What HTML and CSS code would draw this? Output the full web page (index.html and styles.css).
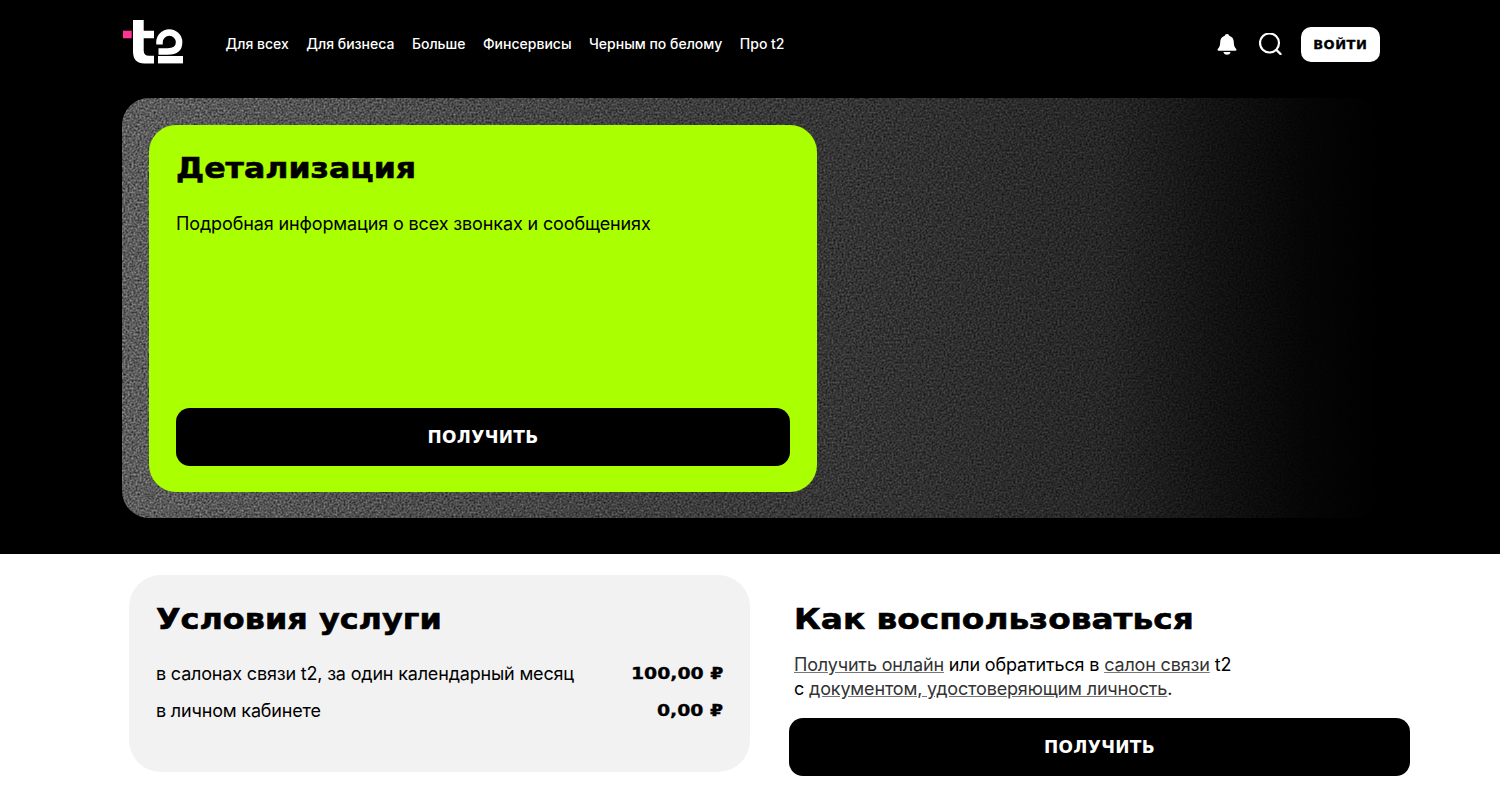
FILE: index.html
```html
<!DOCTYPE html>
<html lang="ru">
<head>
    <meta charset="utf-8">
    <title>Детализация</title>
    <link rel="stylesheet" href="styles.css">
</head>
<body>
    <div class="top">
        <header class="header">
            <svg class="logo" width="62" height="44" viewBox="0 0 62 44">
                <rect x="1" y="10.7" width="8.7" height="7.6" fill="#ff3495"/>
                <path fill="#fff" d="M11 0h10.7v10.7H32v7.6H21.7v12.2q0 5.3 5.3 5.3h5v7.6h-9.5Q11 43.400 11 31.500z"/>
                <path fill="none" stroke="#fff" stroke-width="6.500" d="M37.500 24.500v-2.200a9.800 9.800 0 0 1 19.600 0q0 9.200-11.500 9.200H36.500"/>
                <rect x="36" y="36" width="25" height="7.400" fill="#fff"/>
            </svg>
            <nav class="nav">
                <a href="#">Для всех</a>
                <a href="#">Для бизнеса</a>
                <a href="#">Больше</a>
                <a href="#">Финсервисы</a>
                <a href="#">Черным по белому</a>
                <a href="#">Про t2</a>
            </nav>
            <div class="header-right">
                <svg class="bell" width="20" height="21" viewBox="0 0 20 21">
                    <path fill="#fff" d="M10 0c1.300 0 2 .8 2.200 1.700 3 .8 4.600 3.300 4.600 6.300 0 3 .6 5.300 2.400 7 .6.600.3 1.700-.7 1.700H1.500c-1 0-1.300-1.100-.7-1.700 1.800-1.700 2.400-4 2.400-7 0-3 1.600-5.500 4.600-6.300C8 .8 8.700 0 10 0z"/>
                    <path fill="#fff" d="M6.500 18h7c0 1.600-1.500 2.800-3.500 2.800S6.500 19.600 6.500 18z"/>
                </svg>
                <svg class="search" width="23" height="22" viewBox="0 0 23 22">
                    <circle cx="10.500" cy="10" r="9.500" fill="none" stroke="#fff" stroke-width="2.200"/>
                    <path stroke="#fff" stroke-width="2.400" stroke-linecap="round" d="M17.500 17l4 4"/>
                </svg>
                <button class="login">ВОЙТИ</button>
            </div>
        </header>
        <section class="hero">
            <div class="hero-card">
                <h1 class="title">Детализация</h1>
                <p class="hero-text">Подробная информация о всех звонках и сообщениях</p>
                <button class="big-button">ПОЛУЧИТЬ</button>
            </div>
        </section>
    </div>
    <div class="bottom">
        <section class="terms">
            <h2 class="title">Условия услуги</h2>
            <div class="terms-row terms-row-first">
                <span>в салонах связи t2, за один календарный месяц</span>
                <b class="price">100,00 ₽</b>
            </div>
            <div class="terms-row">
                <span>в личном кабинете</span>
                <b class="price">0,00 ₽</b>
            </div>
        </section>
        <section class="howto">
            <h2 class="title">Как воспользоваться</h2>
            <p class="howto-text"><a href="#">Получить онлайн</a> или обратиться в <a href="#">салон связи</a> t2<br>с <a href="#">документом, удостоверяющим личность</a>.</p>
            <button class="big-button">ПОЛУЧИТЬ</button>
        </section>
    </div>
</body>
</html>
```

FILE: styles.css
```css
body {
    margin: 0;
    font-family: Inter, "Noto Sans", sans-serif;
    color: #000;
    background-color: #fff;
    overflow: hidden;
}

button {
    font-family: "DejaVu Sans", sans-serif;
    font-weight: bold;
    border: 0;
}

.top {
    height: 554px;
    background-color: #000;
}

.header {
    display: flex;
    align-items: center;
    height: 98px;
    padding-left: 122px;
    padding-right: 120px;
    padding-bottom: 10px;
    box-sizing: border-box;
}

.logo {
    margin-bottom: 4px;
}

.nav {
    display: flex;
    gap: 17.5px;
    margin-left: 41.5px;
    margin-bottom: 2px;
}

.nav a {
    color: #fff;
    font-size: 14px;
    font-weight: 500;
    text-decoration: none;
}

.header-right {
    display: flex;
    align-items: center;
    margin-left: auto;
}

.bell {
    margin-right: 22.5px;
}

.search {
    margin-right: 18.5px;
}

.login {
    width: 79.5px;
    height: 35px;
    border-radius: 10px;
    background-color: #fff;
    color: #000;
    font-size: 13px;
    letter-spacing: 0.5px;
    -webkit-text-stroke: 0.3px #000;
}

.hero {
    width: 1258px;
    height: 420px;
    margin-left: 122px;
    padding: 27px;
    box-sizing: border-box;
    border-radius: 27px;
    background-color: #000;
    background-image:
        linear-gradient(to right, rgba(0,0,0,0) 0, rgba(0,0,0,0.42) 56%, rgba(0,0,0,0.58) 78%, rgba(0,0,0,0.8) 87%, rgba(0,0,0,0.94) 94%, #000 100%),
        url("data:image/svg+xml,%3Csvg xmlns='http://www.w3.org/2000/svg' width='400' height='400'%3E%3Cfilter id='n' color-interpolation-filters='sRGB'%3E%3CfeTurbulence type='fractalNoise' baseFrequency='0.5' numOctaves='2' stitchTiles='stitch'/%3E%3CfeColorMatrix values='0.65 0 0 0 0.04 0.65 0 0 0 0.04 0.65 0 0 0 0.04 0 0 0 0 1'/%3E%3C/filter%3E%3Crect width='400' height='400' filter='url(%23n)'/%3E%3C/svg%3E");
}

.hero-card {
    display: flex;
    flex-direction: column;
    width: 668px;
    height: 367px;
    padding: 25px 27px 26px;
    box-sizing: border-box;
    border-radius: 27px;
    background-color: #aaff00;
}

.title {
    margin: 0;
    font-family: "DejaVu Sans", sans-serif;
    font-size: 29px;
    font-weight: bold;
    line-height: 36px;
    white-space: nowrap;
    -webkit-text-stroke: 0.6px #000;
    transform: scaleX(1.09);
    transform-origin: left center;
}

.terms .title {
    transform: scaleX(1.1);
}

.hero-text {
    margin: 26px 0 0;
    font-size: 18px;
    line-height: 24px;
    letter-spacing: -0.13px;
}

.big-button {
    width: 100%;
    height: 58px;
    margin-top: auto;
    border-radius: 14px;
    background-color: #000;
    color: #fff;
    font-size: 17px;
    letter-spacing: 0.3px;
}

.bottom {
    display: grid;
    grid-template-columns: 621px 621px;
    gap: 39px;
    padding: 21px 0 19px 129px;
}

.terms {
    height: 197px;
    padding: 26px 27px;
    box-sizing: border-box;
    border-radius: 32px;
    background-color: #f2f2f2;
}

.terms-row {
    display: flex;
    justify-content: space-between;
    align-items: center;
    height: 24px;
    margin-top: 13px;
    font-size: 18px;
    letter-spacing: -0.18px;
}

.terms-row-first {
    margin-top: 24px;
}

.price {
    font-family: "DejaVu Sans", sans-serif;
    font-size: 16px;
    letter-spacing: 0;
    -webkit-text-stroke: 0.3px #000;
    transform: scaleX(1.18);
    transform-origin: right center;
}

.howto {
    display: flex;
    flex-direction: column;
    height: 201px;
    padding-top: 26px;
    box-sizing: border-box;
}

.howto .title {
    margin-left: 5px;
    transform: scaleX(1.13);
}

.howto-text {
    margin: 16px 0 0 5px;
    font-size: 18px;
    line-height: 24px;
    letter-spacing: -0.16px;
}

.howto-text a {
    color: #333;
    text-decoration: underline;
    text-decoration-color: #777;
}
```
